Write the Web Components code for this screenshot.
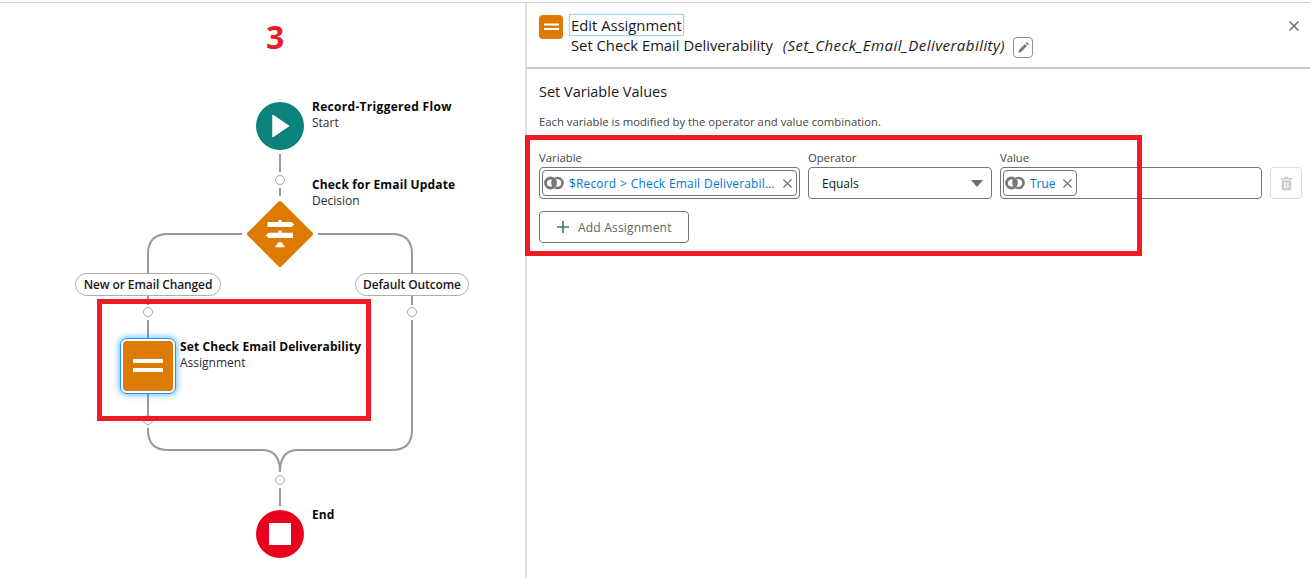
<!DOCTYPE html>
<html lang="en">
<head>
<meta charset="utf-8">
<title>Edit Assignment</title>
<style>
  html, body { margin: 0; height: 100%; background: #fff; overflow: hidden; }
  body { font-family: "Open Sans", "Noto Sans", sans-serif; color: #181818; }
</style>
</head>
<body>
<flow-page>
  <flow-canvas slot="canvas"></flow-canvas>
  <assignment-panel slot="panel"></assignment-panel>
</flow-page>

<script>
const ICONS = {
  equals: `<svg viewBox="0 0 30 14" aria-hidden="true"><path d="M0 0h30v4H0zM0 9h30v4H0z" fill="#fff"></path></svg>`,
  rings: `
    <svg viewBox="0 0 20 14" width="20" height="14" aria-hidden="true">
      <circle cx="13.500" cy="7" r="5" fill="none" stroke="#777" stroke-width="2.600"></circle>
      <circle cx="6.500" cy="7" r="6.400" fill="none" stroke="#fff" stroke-width="1"></circle>
      <circle cx="6.500" cy="7" r="5" fill="none" stroke="#777" stroke-width="2.800"></circle>
    </svg>
  `,
  close: `<svg viewBox="0 0 12 12" aria-hidden="true"><path d="M1.500 1.500l9 9M10.500 1.500l-9 9" stroke="currentColor" stroke-width="1.500" fill="none"></path></svg>`,
  pencil: `<svg viewBox="0 0 14 14" aria-hidden="true"><path d="M10.600 1.200l2.200 2.200-1.200 1.200-2.200-2.200zM8.500 3.300l2.200 2.200-6.300 6.300-3 .8.800-3z" fill="#777"></path></svg>`,
  trash: `<svg viewBox="0 0 14 14" aria-hidden="true"><path d="M5.500 .8h3v1.100h3.700v1.300H1.800V1.900h3.700zM2.600 4.200h8.800V13.400H2.600zM5 6v5.400h1.300V6zM7.700 6v5.400H9V6z" fill="#c9c9c9" fill-rule="evenodd"></path></svg>`,
  plus: `<svg viewBox="0 0 14 14" aria-hidden="true"><path d="M6.200 1h1.600v5.200H13v1.600H7.800V13H6.200V7.800H1V6.200h5.200z" fill="#3f7676"></path></svg>`,
};

class FlowPage extends HTMLElement {
  connectedCallback() {
    if (this.shadowRoot) return;
    this.attachShadow({ mode: "open" }).innerHTML = `
      <style>
        :host { display: block; width: 1310px; height: 578px; overflow: hidden; }
        .top { height: 2px; background: #fff; border-bottom: 1px solid #d0d0d0; }
        .body { display: grid; grid-template-columns: 525px 2px 1fr; height: 575px; }
        .rule { background: #e0e0e0; }
      </style>
      <div class="top"></div>
      <div class="body">
        <slot name="canvas"></slot>
        <div class="rule"></div>
        <slot name="panel"></slot>
      </div>
    `;
  }
}

// One labelled element on the diagram; its place is set by the canvas
class FlowNode extends HTMLElement {
  connectedCallback() {
    if (this.shadowRoot) return;
    this.attachShadow({ mode: "open" }).innerHTML = `
      <style>
        :host { position: absolute; display: block; line-height: 16px; font-size: 12px; white-space: nowrap; color: #181818; }
        strong { display: block; font-weight: 700; letter-spacing: var(--title-spacing, 0.1px); color: #080707; }
        span { display: block; color: #2b2b2b; }
      </style>
      <strong>${this.getAttribute("title") || ""}</strong>
      <span>${this.getAttribute("kind") || ""}</span>
    `;
  }
}

class FlowCanvas extends HTMLElement {
  connectedCallback() {
    if (this.shadowRoot) return;
    this.attachShadow({ mode: "open" }).innerHTML = `
      <style>
        :host { position: relative; display: block; height: 575px; }
        svg.wires { position: absolute; left: 0; top: -3px; width: 525px; height: 578px; }
        .wire { fill: none; stroke: #999; stroke-width: 2; }
        .dot { fill: #fff; stroke: #a8a8a8; stroke-width: 1; }
        .num { position: absolute; left: 266px; top: 12px; font-size: 32px; line-height: 44px; font-weight: 700; color: #ed1c24; }
        .pill {
          position: absolute; box-sizing: border-box; height: 23px; line-height: 21px;
          border: 1px solid #aeaeae; border-radius: 12px; background: #fff;
          font-size: 12px; font-weight: 600; text-align: center; color: #181818; letter-spacing: -0.1px;
        }
        .assign {
          position: absolute; left: 120px; top: 335px; width: 56px; height: 56px; box-sizing: border-box;
          border: 1px solid #1b96ff; border-radius: 7px; background: #fff; padding: 2px;
          box-shadow: 0 0 6px 1px rgba(27, 150, 255, 0.65); display: grid;
        }
        .assign div { background: #dd7a01; border-radius: 4px; display: grid; place-items: center; }
        .assign svg { width: 30px; height: 14px; display: block; }
        .mark { position: absolute; box-sizing: border-box; border: 5px solid #ed1c24; left: 97px; top: 296px; width: 274px; height: 122px; }
        flow-node.start { left: 312px; top: 96px; --title-spacing: 0.3px; }
        flow-node.decision { left: 312px; top: 174px; --title-spacing: 0.15px; }
        flow-node.assignment { left: 180px; top: 336px; }
        flow-node.end { left: 312px; top: 504px; }
      </style>
      <svg class="wires" viewBox="0 0 525 578" aria-hidden="true">
        <path class="wire" d="M280 154V172M280 188V196"></path>
        <path class="wire" d="M242 234H168Q148 234 148 254V273M318 234H392Q412 234 412 254V273"></path>
        <path class="wire" d="M148 296V305M148 320V338M148 394V416M148 428V430Q148 450 168 450H262Q280 450 280 472M412 296V305M412 320V430Q412 450 392 450H298Q280 450 280 472"></path>
        <path class="wire" d="M280 488V506"></path>
        <circle class="dot" cx="280" cy="180" r="4.500"></circle>
        <circle class="dot" cx="148" cy="312" r="4.500"></circle>
        <circle class="dot" cx="412" cy="312" r="4.500"></circle>
        <circle class="dot" cx="148" cy="420" r="4.500"></circle>
        <circle class="dot" cx="280" cy="480" r="4.500"></circle>

        <circle cx="280" cy="126" r="24" fill="#0b827c"></circle>
        <path d="M273 115.500L288.500 126 273 136.500z" fill="#fff" stroke="#fff" stroke-width="1.500" stroke-linejoin="round"></path>

        <path d="M280 203L311 234 280 265 249 234z" fill="#dd7a01" stroke="#dd7a01" stroke-width="4" stroke-linejoin="round"></path>
        <path d="M278.500 220h3v2H291.500l2.800 2.500-2.800 2.500H267.500v-5h11z" fill="#fff"></path>
        <path d="M278.500 230.500h3v2.300H293v5.200H268.500l-2.800-2.600 2.800-2.600h10z" fill="#fff"></path>
        <path d="M278.500 242.300h3l3.500 5H275z" fill="#fff"></path>

        <circle cx="280" cy="534" r="24" fill="#ea001e"></circle>
        <rect x="269" y="523" width="22" height="22" fill="#fff"></rect>
      </svg>
      <div class="num">3</div>
      <flow-node class="start" title="Record-Triggered Flow" kind="Start"></flow-node>
      <flow-node class="decision" title="Check for Email Update" kind="Decision"></flow-node>
      <div class="pill" style="left:75px;top:270px;width:146px">New or Email Changed</div>
      <div class="pill" style="left:355px;top:270px;width:114px">Default Outcome</div>
      <div class="assign"><div>${ICONS.equals}</div></div>
      <flow-node class="assignment" title="Set Check Email Deliverability" kind="Assignment"></flow-node>
      <flow-node class="end" title="End"></flow-node>
      <div class="mark"></div>
    `;
  }
}

class ResourcePill extends HTMLElement {
  connectedCallback() {
    if (this.shadowRoot) return;
    this.attachShadow({ mode: "open" }).innerHTML = `
      <style>
        :host {
          display: flex; align-items: center; box-sizing: border-box; height: 26px; min-width: 0;
          border: 1px solid #747474; border-radius: 4px; background: #fff; padding: 0 3px 0 1px;
          font-size: 12px; color: #0176d3;
        }
        .ico { flex: none; display: block; height: 14px; }
        .ico svg { display: block; }
        .txt { flex: 1; min-width: 0; margin-left: 5px; overflow: hidden; text-overflow: ellipsis; white-space: nowrap; letter-spacing: var(--pill-spacing, 0); word-spacing: var(--pill-words, 0); }
        .x { flex: none; width: 11px; height: 11px; margin-left: 6px; color: #706e6b; }
        .x svg { display: block; width: 11px; height: 11px; }
      </style>
      <span class="ico">${ICONS.rings}</span>
      <span class="txt"><slot></slot></span>
      <span class="x">${ICONS.close}</span>
    `;
  }
}

class FieldBox extends HTMLElement {
  connectedCallback() {
    if (this.shadowRoot) return;
    this.attachShadow({ mode: "open" }).innerHTML = `
      <style>
        :host { display: grid; grid-template-rows: 18px 32px; font-size: 12px; min-width: 0; }
        label { color: #444; font-size: 11.300px; line-height: 18px; margin-top: 0; }
        .box {
          box-sizing: border-box; height: 32px; min-width: 0; display: flex; align-items: center;
          border: 1px solid #747474; border-radius: 4px; background: #fff; padding: 0 2px;
        }
      </style>
      <label>${this.getAttribute("label") || ""}</label>
      <div class="box"><slot></slot></div>
    `;
  }
}

class AssignmentPanel extends HTMLElement {
  connectedCallback() {
    if (this.shadowRoot) return;
    this.attachShadow({ mode: "open" }).innerHTML = `
      <style>
        :host { position: relative; display: block; height: 575px; color: #181818; }
        header {
          box-sizing: border-box; height: 66px; border-bottom: 2px solid #c9c9c9;
          display: grid; grid-template-columns: 24px 1fr auto; column-gap: 8px; padding: 12px 10px 0 12px;
        }
        .tile { width: 24px; height: 24px; background: #dd7a01; border-radius: 4px; display: grid; place-items: center; }
        .tile svg { width: 15px; height: 8px; display: block; }
        .heads { font-size: 14.800px; line-height: 20px; }
        .title { display: inline-block; margin: -1px 0 0 -1px; padding: 0 1px; outline: 1px solid #a5d3f7; box-shadow: 0 0 3px #a5d3f7; }
        .sub { display: flex; align-items: center; white-space: nowrap; height: 20px; margin-top: 0; }
        .sub em { margin-left: 10px; font-size: 15px; letter-spacing: 0.45px; }
        .edit {
          box-sizing: border-box; width: 20px; height: 21px; margin-left: 8px; margin-top: 4px;
          border: 1px solid #8f8f8f; border-radius: 4px; display: grid; place-items: center;
        }
        .edit svg { width: 13px; height: 13px; display: block; }
        .close { width: 12px; height: 12px; margin-top: 5px; color: #706e6b; }
        .close svg { display: block; width: 12px; height: 12px; }
        main { padding: 13px 8px 0 12px; }
        h2 { margin: 0; font-size: 14.500px; line-height: 20px; font-weight: 400; }
        p { margin: 11px 0 0; font-size: 11.300px; line-height: 18px; color: #444; }
        .row {
          display: grid; grid-template-columns: 261px 184px 262px 32px; column-gap: 8px;
          margin-top: 18px; align-items: end;
        }
        resource-pill.var { width: 100%; --pill-spacing: 0.15px; --pill-words: 0.5px; }
        .equals { flex: 1; padding-left: 11px; font-size: 12px; }
        .tri { width: 12px; height: 7px; margin-right: 6px; display: block; }
        .trash {
          box-sizing: border-box; height: 32px; border: 1px solid #dcdcdc; border-radius: 4px;
          display: grid; place-items: center;
        }
        .trash svg { width: 15px; height: 15px; display: block; }
        .add {
          display: inline-flex; align-items: center; box-sizing: border-box; height: 32px; width: 150px;
          margin-top: 12px; padding-left: 16px; border: 1px solid #747474; border-radius: 4px;
          font-size: 12px; letter-spacing: 0.2px; color: #54696b;
        }
        .add svg { width: 14px; height: 14px; display: block; margin-right: 8px; }
        .mark { position: absolute; box-sizing: border-box; left: -2px; top: 132px; width: 617px; height: 121px; border: 5px solid #ed1c24; }
      </style>
      <header>
        <div class="tile">${ICONS.equals}</div>
        <div class="heads">
          <div class="title">Edit Assignment</div>
          <div class="sub">Set Check Email Deliverability <em>(Set_Check_Email_Deliverability)</em>
            <span class="edit">${ICONS.pencil}</span></div>
        </div>
        <div class="close">${ICONS.close}</div>
      </header>
      <main>
        <h2>Set Variable Values</h2>
        <p>Each variable is modified by the operator and value combination.</p>
        <div class="row">
          <field-box label="Variable"><resource-pill class="var">$Record &gt; Check Email Deliverability</resource-pill></field-box>
          <field-box label="Operator">
            <span class="equals">Equals</span>
            <svg class="tri" viewBox="0 0 12 7" aria-hidden="true"><path d="M0 0h12L6 7z" fill="#706e6b"></path></svg>
          </field-box>
          <field-box label="Value"><resource-pill>True</resource-pill></field-box>
          <div class="trash">${ICONS.trash}</div>
        </div>
        <div class="add">${ICONS.plus}Add Assignment</div>
      </main>
      <div class="mark"></div>
    `;
  }
}

customElements.define("flow-page", FlowPage);
customElements.define("flow-node", FlowNode);
customElements.define("flow-canvas", FlowCanvas);
customElements.define("resource-pill", ResourcePill);
customElements.define("field-box", FieldBox);
customElements.define("assignment-panel", AssignmentPanel);
</script>
</body>
</html>
